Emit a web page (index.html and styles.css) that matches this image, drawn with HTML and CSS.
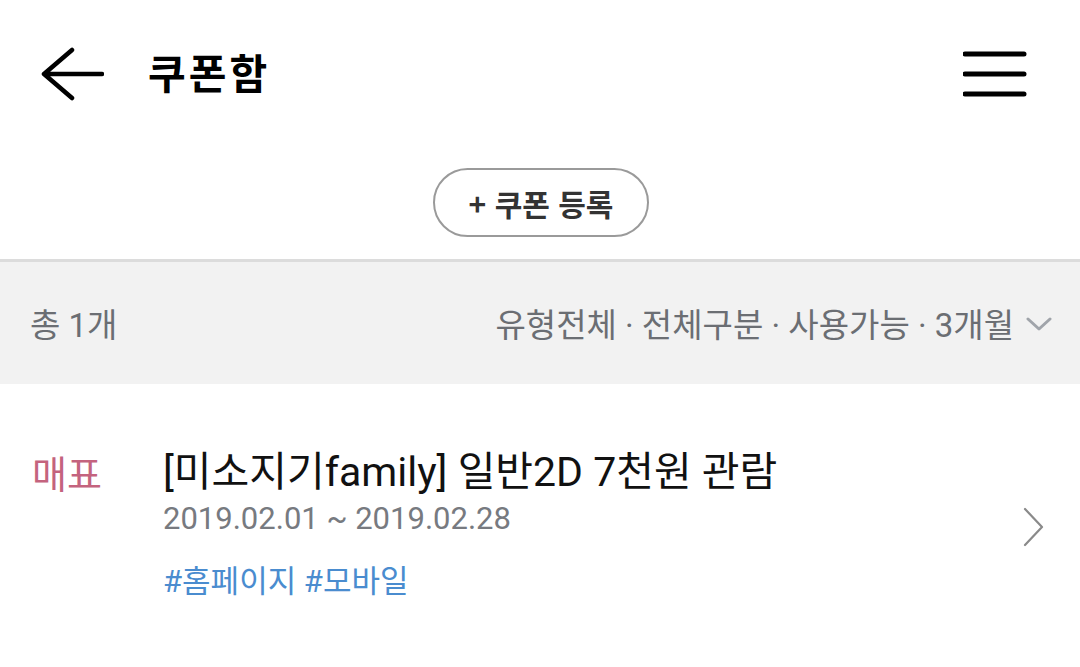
FILE: index.html
```html
<!DOCTYPE html>
<html lang="ko">
<head>
    <meta charset="UTF-8">
    <meta name="viewport" content="width=device-width, initial-scale=1.0">
    <title>쿠폰함</title>
    <link rel="stylesheet" href="styles.css">
</head>
<body>

<header class="topbar">
    <div class="topbar-left">
        <svg class="icon-back" width="64" height="56" viewBox="0 0 64 56">
            <path d="M32 4 L4 28 L32 52 M4 28 H62" fill="none" stroke="#000" stroke-width="4.5" stroke-linecap="round" stroke-linejoin="round"/>
        </svg>
        <h1 class="title">쿠폰함</h1>
    </div>
    <svg class="icon-menu" width="64" height="48" viewBox="0 0 64 48">
        <path d="M2 4 H61 M2 24 H61 M2 44 H61" fill="none" stroke="#000" stroke-width="5" stroke-linecap="round"/>
    </svg>
</header>

<div class="register">
    <button class="btn-register" type="button">+ 쿠폰 등록</button>
</div>

<div class="filterbar">
    <span class="count">총 1개</span>
    <span class="filters">
        유형전체 · 전체구분 · 사용가능 · 3개월
        <svg class="icon-down" width="26" height="16" viewBox="0 0 26 16">
            <path d="M2 3 L13 13 L24 3" fill="none" stroke="#a0a4aa" stroke-width="3" stroke-linecap="round" stroke-linejoin="round"/>
        </svg>
    </span>
</div>

<ul class="coupon-list">
    <li class="coupon">
        <span class="coupon-type">매표</span>
        <div class="coupon-body">
            <div class="coupon-name">[미소지기family] 일반2D 7천원 관람</div>
            <div class="coupon-date">2019.02.01 ~ 2019.02.28</div>
            <div class="coupon-tags">#홈페이지 #모바일</div>
        </div>
        <svg class="icon-next" width="24" height="40" viewBox="0 0 24 40">
            <path d="M3 2 L20 20 L3 38" fill="none" stroke="#8a8a8a" stroke-width="2.2" stroke-linecap="round" stroke-linejoin="round"/>
        </svg>
    </li>
</ul>

</body>
</html>
```

FILE: styles.css
```css
body {
    margin: 0;
    background-color: #ffffff;
    font-family: "Roboto", "Noto Sans CJK KR", sans-serif;
    color: #000;
}

.topbar {
    display: flex;
    align-items: center;
    justify-content: space-between;
    height: 150px;
    padding: 0 53px 0 40px;
}

.topbar-left {
    display: flex;
    align-items: center;
    gap: 44px;
    margin-top: -2px;
}

.title {
    margin: 0;
    font-family: "Noto Sans CJK KR", sans-serif;
    font-size: 41px;
    font-weight: 700;
    letter-spacing: 3px;
    line-height: 50px;
    margin-top: -6px;
}

.icon-menu {
    margin-top: -3px;
}

.register {
    display: flex;
    justify-content: center;
    padding: 18px 0 22px 0;
    border-bottom: 3px solid #dcdcdc;
}

.btn-register {
    width: 216px;
    height: 69px;
    border: 2.5px solid #9a9a9a;
    border-radius: 35px;
    background-color: #fff;
    font-family: "Noto Sans CJK KR", sans-serif;
    font-size: 30px;
    font-weight: 700;
    color: #333;
    padding: 0;
    margin-left: 2px;
}

.filterbar {
    display: flex;
    align-items: center;
    justify-content: space-between;
    height: 122px;
    padding: 0 28px 0 30px;
    background-color: #f2f2f2;
    font-size: 33px;
    color: #6b6e73;
}

.filters {
    display: flex;
    align-items: center;
    gap: 12px;
}

.icon-down {
    margin-top: 2px;
}

.coupon-list {
    list-style: none;
    margin: 0;
    padding: 0;
}

.coupon {
    display: flex;
    align-items: flex-start;
    padding: 63px 34px 0 32px;
}

.coupon-type {
    width: 131px;
    font-family: "Noto Sans CJK KR", sans-serif;
    font-size: 38px;
    color: #c4637e;
    line-height: 50px;
}

.coupon-body {
    flex: 1;
}

.coupon-name {
    font-size: 41px;
    line-height: 50px;
    color: #111;
}

.coupon-date {
    font-size: 31px;
    line-height: 44px;
    color: #777a80;
}

.coupon-tags {
    margin-top: 21px;
    font-size: 31px;
    line-height: 40px;
    color: #4a8ccf;
}

.icon-next {
    margin-top: 60px;
}
```
